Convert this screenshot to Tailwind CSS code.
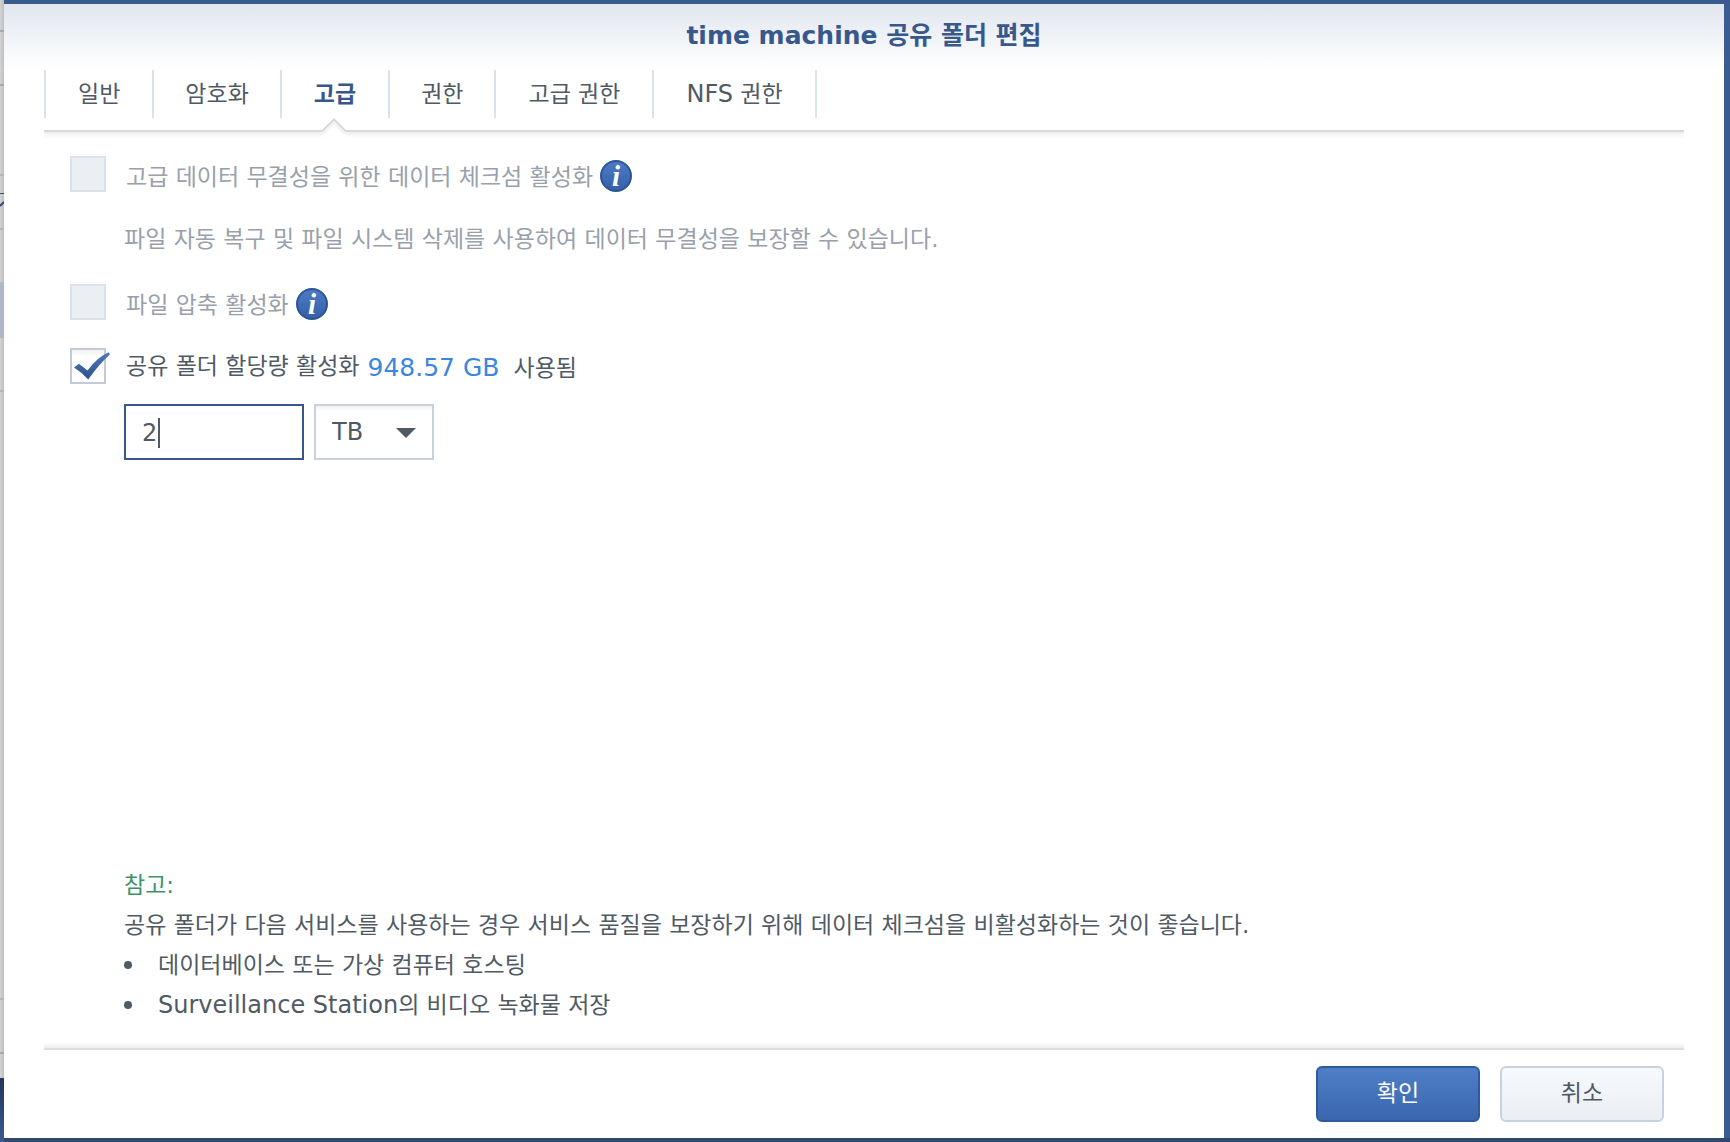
<!DOCTYPE html>
<html lang="ko">
<head>
    <meta charset="UTF-8">
    <meta name="viewport" content="width=device-width, initial-scale=1.0">
    <title>time machine 공유 폴더 편집</title>
    <script src="https://cdn.jsdelivr.net/npm/@tailwindcss/browser@4"></script>
</head>
<body class="relative min-h-screen flex flex-col pt-1 pl-1 pr-1.5 pb-1 bg-[#3b5c93] font-['DejaVu_Sans','Noto_Sans_CJK_KR',sans-serif] text-[23px] leading-10 text-[#505a64]">
    <!-- Desktop edges around the dialog -->
    <div class="absolute inset-x-0 bottom-0 h-1 bg-[#2f486f]"></div>
    <div class="absolute left-0 bottom-0 w-1 h-16 bg-linear-to-b from-[#22355c] to-[#3c5a92]"></div>
    <div class="absolute left-0 top-0 bottom-16 w-1 bg-linear-to-r from-[#d4d4d4] to-[#bebebe]">
        <div class="absolute top-[30px] w-1 h-0.5 bg-[#a4a9b1]"></div>
        <div class="absolute top-[84px] w-1 h-0.5 bg-[#a4a9b1]"></div>
        <div class="absolute top-[174px] w-1 h-0.5 bg-[#b4b7bb]"></div>
        <div class="absolute top-[193px] w-1 h-px bg-[#2f4c7c]"></div>
        <svg class="absolute top-[201px] w-1 h-1.5" viewBox="0 0 4 6"><path d="M0 5L4 1" stroke="#2f4c7c" stroke-width="2"/></svg>
        <div class="absolute top-[228px] w-1 h-0.5 bg-[#b4b7bb]"></div>
        <div class="absolute top-[282px] w-1 h-14 bg-[#aeb8c8]"></div>
        <div class="absolute top-[390px] w-1 h-0.5 bg-[#b4b7bb]"></div>
        <div class="absolute bottom-[78px] w-1 h-0.5 bg-[#b4b7bb]"></div>
        <div class="absolute bottom-6 w-1 h-0.5 bg-[#a4a9b1]"></div>
    </div>
    <div class="absolute left-1 right-0 top-0 h-1 bg-[#395a8c]"></div>

    <main class="relative flex-1 flex flex-col bg-white">
        <header class="h-[66px] bg-linear-to-b from-[#e1e6ef] via-[#f0f3f7] to-white text-center">
            <h1 class="pt-3 text-[25px]/10 font-bold text-[#38588c]">time machine 공유 폴더 편집</h1>
        </header>

        <nav class="mx-10 h-[60px]">
            <ul class="flex text-center">
                <li><button type="button" class="h-12 px-8 border-l-2 border-[#dae3ed]">일반</button></li>
                <li><button type="button" class="h-12 px-[31px] border-l-2 border-[#dae3ed]">암호화</button></li>
                <li class="relative">
                    <button type="button" class="h-12 px-8 border-l-2 border-[#dae3ed] font-bold text-[#38588c]">고급</button>
                    <svg class="absolute z-10 left-1/2 top-full -ml-3.5 w-7 h-5" viewBox="0 0 28 20">
                        <path d="M2 12.5V19H26V12.5L14 0.5Z" fill="#fff"/>
                        <path d="M0 15.5H3.5L14 5L24.500 15.500H28" fill="none" stroke="#f4f4f4" stroke-width="2"/>
                        <path d="M0 13H2.500L14 1.500L25.500 13H28" fill="none" stroke="#d8d8d8" stroke-width="2"/>
                    </svg>
                </li>
                <li><button type="button" class="h-12 px-[31px] border-l-2 border-[#dae3ed]">권한</button></li>
                <li><button type="button" class="h-12 px-8 border-l-2 border-[#dae3ed]">고급 권한</button></li>
                <li><button type="button" class="h-12 px-8 border-x-2 border-[#dae3ed]"><span class="text-2xl/10">NFS</span> 권한</button></li>
            </ul>
        </nav>
        <div class="mx-10 h-2 border-t-2 border-[#d8d8d8] bg-linear-to-b from-[#eeeeee] to-white"></div>

        <form id="shareForm" class="flex-1 flex flex-col pl-[66px] pr-10 pt-[18px]">
            <div class="flex items-start h-[62px]">
                <input type="checkbox" id="checksum" disabled class="appearance-none size-9 border-2 border-[#dae3ea] bg-[#ebeff4]">
                <label for="checksum" class="ml-5 leading-[42px] text-[#98a1ab]">고급 데이터 무결성을 위한 데이터 체크섬 활성화</label>
                <button type="button" aria-label="체크섬 정보" class="ml-[7px] mt-1">
                    <svg class="size-8" viewBox="0 0 32 32">
                        <defs><linearGradient id="infoFill" x1="0" y1="0" x2="0" y2="1"><stop offset="0" stop-color="#4d7cc4"/><stop offset="1" stop-color="#355fa8"/></linearGradient></defs>
                        <circle cx="16" cy="16" r="15" fill="url(#infoFill)" stroke="#2c5595" stroke-width="2"/>
                        <text x="16" y="26" text-anchor="middle" font-family="Liberation Serif, serif" font-size="29" font-weight="bold" font-style="italic" fill="#fff">i</text>
                    </svg>
                </button>
            </div>
            <p class="ml-[54px] h-[66px] leading-[42px] text-[#98a1ab]">파일 자동 복구 및 파일 시스템 삭제를 사용하여 데이터 무결성을 보장할 수 있습니다.</p>
            <div class="flex items-start h-16">
                <input type="checkbox" id="compress" disabled class="appearance-none size-9 border-2 border-[#dae3ea] bg-[#ebeff4]">
                <label for="compress" class="ml-5 leading-[42px] text-[#98a1ab]">파일 압축 활성화</label>
                <button type="button" aria-label="압축 정보" class="ml-[7px] mt-1">
                    <svg class="size-8" viewBox="0 0 32 32">
                        <circle cx="16" cy="16" r="15" fill="url(#infoFill)" stroke="#2c5595" stroke-width="2"/>
                        <text x="16" y="26" text-anchor="middle" font-family="Liberation Serif, serif" font-size="29" font-weight="bold" font-style="italic" fill="#fff">i</text>
                    </svg>
                </button>
            </div>
            <div class="flex items-start h-14">
                <div class="relative size-9">
                    <input type="checkbox" id="quota" checked class="peer block appearance-none size-9 border-2 border-[#c4cbd6] bg-linear-to-b from-[#f1f1f3] to-white to-20%">
                    <svg class="absolute left-0 top-0 w-10 h-9 pointer-events-none invisible peer-checked:visible" viewBox="0 0 40 36">
                        <defs><linearGradient id="tickFill" x1="0" y1="0" x2="0" y2="1"><stop offset="0" stop-color="#4c79b8"/><stop offset="1" stop-color="#2f5288"/></linearGradient></defs>
                        <path d="M4 19.500L9 15.800L17.500 22.500Q27 9.500 38.500 4.300L40 6.500Q30 15 18.200 31.500Q12 24.500 4 19.500Z" fill="url(#tickFill)"/>
                    </svg>
                </div>
                <label for="quota" class="ml-5 leading-9">공유 폴더 할당량 활성화</label>
                <span class="ml-2 text-[25px]/10 text-[#3a86e0]">948.57 GB</span>
                <span class="ml-3.5">사용됨</span>
            </div>
            <div class="flex gap-2.5 ml-[54px]">
                <div class="relative">
                    <input type="text" id="quotaSize" aria-label="할당량" value="2" class="block w-[180px] h-14 px-4 pt-0.5 border-2 border-[#38588c] bg-white text-2xl outline-none caret-transparent">
                    <span class="absolute left-[34px] top-3.5 w-0.5 h-[30px] bg-[#505a64]"></span>
                </div>
                <div class="relative">
                    <select aria-label="단위" class="block appearance-none w-[120px] h-14 pl-4 border-2 border-[#c9d2dc] bg-linear-to-b from-[#f1f1f3] to-white to-10% text-2xl">
                        <option>MB</option>
                        <option>GB</option>
                        <option selected>TB</option>
                    </select>
                    <svg class="absolute right-[18px] top-6 w-5 h-2.5 pointer-events-none" viewBox="0 0 20 10"><path d="M0 0H20L10 10Z" fill="#505a64"/></svg>
                </div>
            </div>

            <section class="mt-auto ml-[54px] pb-[17px]">
                <p class="text-[#3b9467]">참고:</p>
                <p>공유 폴더가 다음 서비스를 사용하는 경우 서비스 품질을 보장하기 위해 데이터 체크섬을 비활성화하는 것이 좋습니다.</p>
                <ul>
                    <li class="flex items-center gap-[26px]"><span class="size-2 rounded-full bg-[#505a64]"></span>데이터베이스 또는 가상 컴퓨터 호스팅</li>
                    <li class="flex items-center gap-[26px]"><span class="size-2 rounded-full bg-[#505a64]"></span><span><span class="text-2xl/10">Surveillance Station</span>의 비디오 녹화물 저장</span></li>
                </ul>
            </section>
        </form>

        <footer class="mx-10">
            <div class="h-2 border-b-2 border-[#dedede] bg-linear-to-b from-white to-[#eeeeee]"></div>
            <div class="flex justify-end gap-5 pt-4 pb-4 pr-5">
                <button type="submit" form="shareForm" class="w-[164px] h-14 pb-0.5 rounded-md border-2 border-[#2f5b9c] bg-linear-to-b from-[#4f7fc8] to-[#3a66ad] text-white">확인</button>
                <button type="button" class="w-[164px] h-14 pb-0.5 rounded-md border-2 border-[#c9d2dc] bg-linear-to-b from-[#f6f9fe] to-[#eaedf2]">취소</button>
            </div>
        </footer>
    </main>

    <script>
        document.getElementById('shareForm').addEventListener('submit', e => e.preventDefault());
    </script>
</body>
</html>
